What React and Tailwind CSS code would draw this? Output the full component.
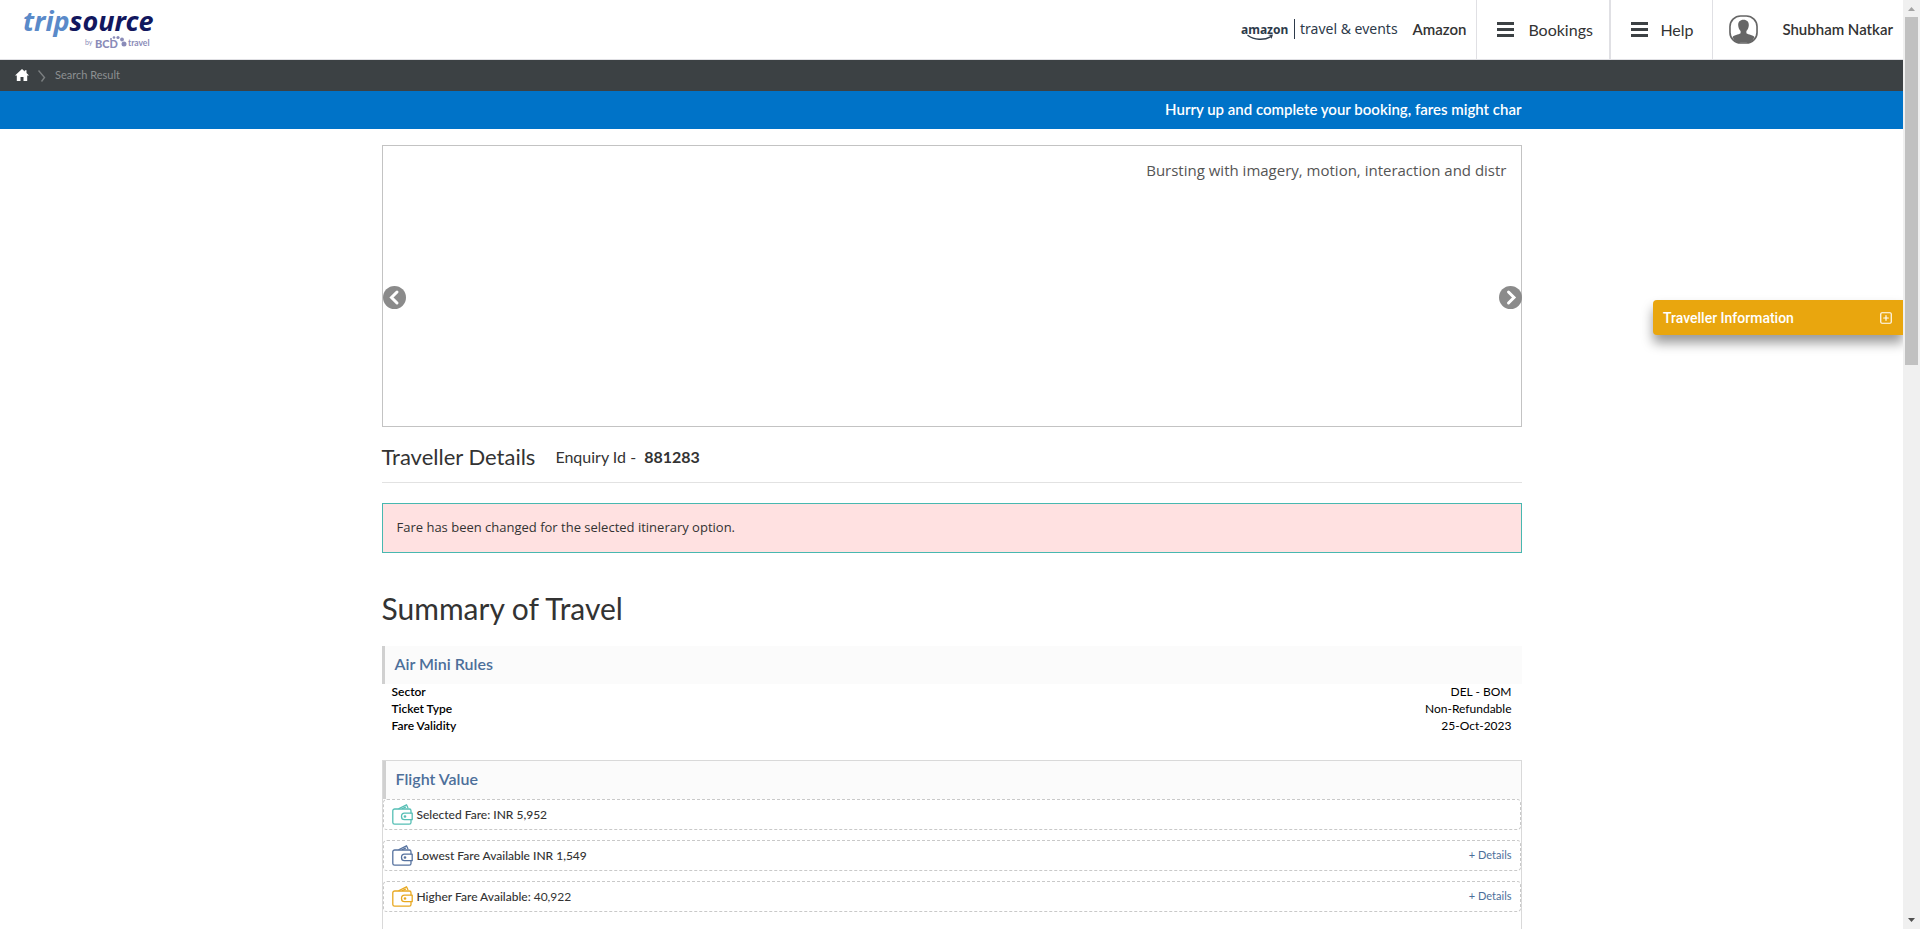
import { SquarePlus } from "lucide-react";

function TripsourceLogo() {
  return (
    <svg width="140" height="54" viewBox="0 0 140 54" role="img" aria-label="tripsource by BCD travel">
      <text x="3" y="31" fontFamily="'Noto Sans', sans-serif" fontStyle="italic" fontWeight="700" fontSize="27" fill="#5a8ac9">
        trip<tspan fill="#12175e">source</tspan>
      </text>
      <g fill="#8a8bb8">
        <text x="65" y="45" fontFamily="Lato, sans-serif" fontSize="7">by</text>
        <text x="75" y="48" fontFamily="Lato, sans-serif" fontWeight="900" fontSize="11">BCD</text>
        <text x="108" y="46" fontFamily="Lato, sans-serif" fontWeight="700" fontSize="8.500">travel</text>
        <circle cx="91" cy="39" r="1" />
        <circle cx="94" cy="37.500" r="1.300" />
        <circle cx="98" cy="37.500" r="1.600" />
        <circle cx="102" cy="39.500" r="1.900" />
        <circle cx="104" cy="44" r="2.500" />
      </g>
    </svg>
  );
}

function AmazonLogo() {
  return (
    <svg width="164" height="26" viewBox="0 0 164 26" role="img" aria-label="amazon travel & events" fill="#2d3a4a">
      <text x="1" y="17" fontFamily="'Noto Sans', sans-serif" fontWeight="700" fontSize="12">amazon</text>
      <path d="M8 18.500c6 4.600 16 5 22.500 1.400" fill="none" stroke="#2d3a4a" strokeWidth="1.500" strokeLinecap="round" />
      <path d="M28 18l5-.6-1.500 4.600-.9-3z" />
      <rect x="54" y="2" width="1" height="20" />
      <text x="60" y="17" fontFamily="'Noto Sans', sans-serif" fontSize="14">travel &amp; events</text>
    </svg>
  );
}

function Bars() {
  return (
    <svg width="17" height="15" viewBox="0 0 17 15" fill="#3c4144" aria-hidden="true">
      <rect width="17" height="3" />
      <rect y="6" width="17" height="3" />
      <rect y="12" width="17" height="3" />
    </svg>
  );
}

function Avatar() {
  return (
    <svg width="29" height="29" viewBox="0 0 30 30" aria-hidden="true">
      <rect x="1" y="1" width="28" height="28" rx="11" fill="#fff" stroke="#666" strokeWidth="1.700" />
      <path d="M15 5c-3.700 0-5.600 2.500-5.500 5.500.1 2.700 1.300 4.700 2.500 6v2.200c0 1.200-6 1.700-8.300 4C5.500 27 8 28.500 12 28.500h6c4 0 6.500-1.500 8.300-5.800-2.300-2.300-8.300-2.800-8.300-4v-2.200c1.200-1.300 2.400-3.300 2.500-6C20.600 7.500 18.700 5 15 5z" fill="#666" />
    </svg>
  );
}

function ArrowIcon({ left }) {
  return (
    <svg width="23" height="23" viewBox="0 0 23 23" aria-hidden="true">
      <circle cx="11.500" cy="11.500" r="11.500" fill="#8b8b8b" />
      <path d={left ? "M14 6l-5.500 5.500L14 17" : "M9.500 6l5.500 5.500L9.500 17"} fill="none" stroke="#fff" strokeWidth="3" strokeLinecap="round" />
    </svg>
  );
}

function Wallet({ color }) {
  return (
    <svg width="21" height="21" viewBox="0 0 21 21" fill="none" stroke={color} strokeWidth="1.300" strokeLinejoin="round" strokeLinecap="round" aria-hidden="true">
      <path d="M19 9V6.800c0-1-.7-1.800-1.700-1.800H2.700c-1 0-1.900.8-1.900 1.800v11.600c0 1 .8 1.800 1.800 1.800h14.700c1 0 1.700-.8 1.700-1.800v-2.600" />
      <path d="M12.500 9.200h7.700v6.500h-7.700c-1.800 0-3-1.400-3-3.200s1.200-3.300 3-3.300z" />
      <circle cx="13" cy="12.500" r=".7" />
      <path d="M7 4.500L14.500.8l1.300 2.800M10.500 4.500l3-1.300" />
    </svg>
  );
}

const rules = [
  ["Sector", "DEL - BOM"],
  ["Ticket Type", "Non-Refundable"],
  ["Fare Validity", "25-Oct-2023"],
];

const fares = [
  { color: "#56bfb5", label: "Selected Fare: INR 5,952", details: false },
  { color: "#56729f", label: "Lowest Fare Available INR 1,549", details: true },
  { color: "#e8a820", label: "Higher Fare Available:", amount: "40,922", details: true },
];

function Header() {
  return (
    <header className="flex h-15 border-b border-[#e0e0e4] bg-white text-[#333]">
      <a href="#" className="pl-5">
        <TripsourceLogo />
      </a>
      <div className="ml-auto flex items-center gap-2 pr-2.5">
        <AmazonLogo />
        <span className="text-[15px] font-semibold">Amazon</span>
      </div>
      <nav className="flex">
        <button className="flex w-[133px] items-center gap-3.5 border-l border-[#e0e0e4] pl-5 text-base">
          <Bars />
          Bookings
        </button>
        <button className="flex w-[103px] items-center gap-3 border-l-2 border-[#e0e0e4] pl-5 text-base">
          <Bars />
          Help
        </button>
      </nav>
      <div className="flex items-center gap-6 border-l border-[#e0e0e4] pr-2.5 pl-4">
        <Avatar />
        <span className="text-[15px] font-semibold">Shubham Natkar</span>
      </div>
    </header>
  );
}

function Breadcrumb() {
  return (
    <nav aria-label="Breadcrumb" className="flex h-[31px] items-center bg-[#3c4144] pl-[15px] text-[11px] text-[#8d9092]">
      <a href="#" aria-label="Home">
        <svg width="14" height="13" viewBox="0 0 14 13" fill="#fff" aria-hidden="true">
          <path d="M7 0L0 6.500h1.800V12h3.700V8h3v4h3.700V6.500H14L11.500 4V1.200H9.800v1.300z" />
        </svg>
      </a>
      <svg className="mx-[9px]" width="8" height="12" viewBox="0 0 8 12" fill="none" stroke="#7b7f81" strokeWidth="1.400" aria-hidden="true">
        <path d="M.5.5l6 7-3 4" />
      </svg>
      <span>Search Result</span>
    </nav>
  );
}

export default function App() {
  return (
    <div className="flex h-screen overflow-hidden bg-white font-[Lato,sans-serif] text-[#333]">
      <div className="relative min-w-0 flex-1 overflow-hidden">
        <Header />
        <Breadcrumb />
        <div className="bg-[#0073c8]">
          <div className="mx-auto h-[38px] max-w-[1140px] overflow-hidden pt-2">
            <p className="text-right text-[15px] leading-5 font-semibold whitespace-nowrap text-white">
              Hurry up and complete your booking, fares might char
            </p>
          </div>
        </div>

        <main className="mx-auto max-w-[1140px] pt-4">
          <section className="relative h-[282px] border border-[#c3c3c3] px-3.5 pt-3">
            <p className="text-right font-['Open_Sans',sans-serif] text-[15px] leading-6 text-[#555]">
              Bursting with imagery, motion, interaction and distr
            </p>
            <button aria-label="Previous" className="absolute top-[140px] left-0">
              <ArrowIcon left />
            </button>
            <button aria-label="Next" className="absolute top-[140px] -right-px">
              <ArrowIcon />
            </button>
          </section>

          <div className="flex h-14 items-center border-b border-[#e2e2e2] pt-1">
            <h2 className="text-[22px]">Traveller Details</h2>
            <p className="ml-5 text-base">
              Enquiry Id - <b className="ml-1 font-bold">881283</b>
            </p>
          </div>

          <div role="alert" className="mt-5 flex h-[50px] items-center border border-[#47b8b0] bg-[#ffe1e1] px-3.5 font-['Open_Sans',sans-serif] text-[13px] text-[#333]">
            Fare has been changed for the selected itinerary option.
          </div>

          <h1 className="mt-[35px] text-[30px] leading-10">Summary of Travel</h1>

          <section className="mt-[18px]">
            <h3 className="h-[38px] border-l-3 border-[#d0d0d0] bg-[#fbfbfb] pt-1.5 pl-2.5 text-base leading-6 font-semibold text-[#4d6f9a]">
              Air Mini Rules
            </h3>
            <table className="-mt-px w-full text-xs leading-[17px] text-black">
              <tbody>
                {rules.map(([name, value]) => (
                  <tr key={name}>
                    <th scope="row" className="pl-2.5 text-left font-semibold">{name}</th>
                    <td className="pr-2.5 text-right">{value}</td>
                  </tr>
                ))}
              </tbody>
            </table>
          </section>

          <section className="mt-[26px] border border-[#d9d9d9] pb-20">
            <h3 className="h-[38px] border-l-3 border-[#d0d0d0] bg-[#fbfbfb] pt-1.5 pl-2.5 text-base leading-6 font-semibold text-[#4d6f9a]">
              Flight Value
            </h3>
            <ul className="flex flex-col gap-2.5">
              {fares.map((fare) => (
                <li key={fare.label} className="flex h-[31px] items-center rounded border border-dashed border-[#c9c9c9] px-2 text-xs">
                  <Wallet color={fare.color} />
                  <span className="ml-1 font-medium">
                    {fare.label} {fare.amount && <span className="font-normal">{fare.amount}</span>}
                  </span>
                  {fare.details && (
                    <button className="ml-auto text-[11px] text-[#4d6f9a]">+ Details</button>
                  )}
                </li>
              ))}
            </ul>
          </section>
        </main>

        <button className="absolute top-[300px] right-0 flex h-[35px] w-[250px] items-center justify-between rounded-l bg-[#e9a60e] px-2.5 font-[Roboto,sans-serif] text-sm font-medium text-white shadow-[0_8px_12px_rgba(0,0,0,0.4)]">
          Traveller Information
          <SquarePlus size={14} />
        </button>
      </div>

      <div aria-hidden="true" className="flex w-[17px] shrink-0 flex-col items-center bg-[#f0f0f0]">
        <svg width="17" height="17" viewBox="0 0 17 17" fill="#a3a3a3"><path d="M5 11h7L8.500 7z" /></svg>
        <div className="h-[348px] w-[13px] bg-[#c1c1c1]" />
        <svg className="mt-auto" width="17" height="17" viewBox="0 0 17 17" fill="#505050"><path d="M5 6h7l-3.500 4z" /></svg>
      </div>
    </div>
  );
}
